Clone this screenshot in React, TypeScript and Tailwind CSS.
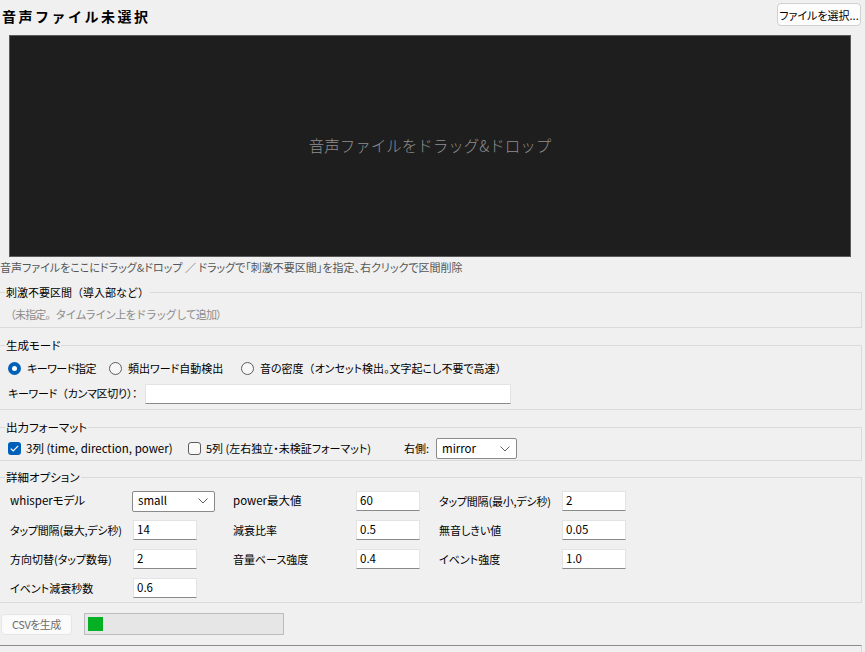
import React from "react";

const FONT = "font-['Noto_Sans_CJK_JP','Noto_Sans',sans-serif]";

function Chevron() {
  return (
    <svg width="10" height="6" viewBox="0 0 10 6" className="shrink-0">
      <polyline points="0.5,0.5 5,5 9.5,0.5" fill="none" stroke="#5f5f5f" strokeWidth="1" />
    </svg>
  );
}

function Select({ value, w }: { value: string; w: string }) {
  return (
    <div
      className={`${w} h-[21px] flex items-center justify-between pl-[5px] pr-[6px] bg-white border border-[#8a8a8a] rounded-[2px] text-[11.5px] text-black`}
    >
      <span>{value}</span>
      <Chevron />
    </div>
  );
}

function Input({ value, w }: { value?: string; w: string }) {
  return (
    <div
      className={`${w} h-[20px] flex items-center pl-[3px] bg-white border border-[#e3e3e3] border-b-[#8a8a8a] text-[11.5px] text-black`}
    >
      {value}
    </div>
  );
}

function Radio({ checked }: { checked?: boolean }) {
  return checked ? (
    <span className="w-[13px] h-[13px] rounded-full bg-[#005fb8] flex items-center justify-center shrink-0">
      <span className="w-[5px] h-[5px] rounded-full bg-white" />
    </span>
  ) : (
    <span className="w-[13px] h-[13px] rounded-full border border-[#5d5d5d] bg-[#f7f7f7] shrink-0" />
  );
}

function Check({ checked }: { checked?: boolean }) {
  return checked ? (
    <span className="w-[13px] h-[13px] rounded-[3px] bg-[#005fb8] flex items-center justify-center shrink-0">
      <svg width="9" height="7" viewBox="0 0 9 7">
        <polyline points="0.8,3.6 3.2,6 8.2,0.8" fill="none" stroke="white" strokeWidth="1.2" />
      </svg>
    </span>
  ) : (
    <span className="w-[13px] h-[13px] rounded-[3px] border border-[#5d5d5d] bg-[#f9f9f9] shrink-0" />
  );
}

function Group({
  title,
  className,
  legendClass,
  bodyClass,
  children,
}: {
  title: string;
  className?: string;
  legendClass?: string;
  bodyClass?: string;
  children: React.ReactNode;
}) {
  return (
    <fieldset className={`w-[862px] border border-l-0 border-[#dadada] ${className ?? ""}`}>
      <legend className={`ml-[5px] px-[1px] text-[11.5px] leading-4 text-black whitespace-nowrap ${legendClass ?? ""}`}>
        {title}
      </legend>
      <div className={bodyClass}>{children}</div>
    </fieldset>
  );
}

const N = "[font-feature-settings:normal]";

export default function App() {
  return (
    <div
      className={`w-[865px] h-[652px] overflow-hidden bg-[#f0f0f0] ${FONT} [font-feature-settings:'palt'] text-black whitespace-nowrap`}
    >
      {/* header */}
      <div className="flex justify-between items-start h-[35px]">
        <div className={`pl-[2px] pt-[6px] text-[14px] leading-5 font-bold tracking-[2.5px] ${N}`}>
          音声ファイル未選択
        </div>
        <button className="mt-[3px] mr-[4px] h-[23px] w-[84px] bg-[#fdfdfd] border border-[#d0d0d0] rounded-[4px] text-[11px] leading-4 text-black">
          ファイルを選択...
        </button>
      </div>

      {/* drop area */}
      <div className="ml-[9px] w-[842px] h-[222px] bg-[#1e1e1e] border border-[#5a5a5a] flex items-center justify-center">
        <span className={`text-[15.5px] font-light text-[#8e8e8e] ${N}`}>音声ファイルをドラッグ&amp;ドロップ</span>
      </div>

      <div className="mt-[2px] h-4 text-[11px] leading-4 text-[#565656]">
        音声ファイルをここにドラッグ&amp;ドロップ ／ ドラッグで「刺激不要区間」を指定、右クリックで区間削除
      </div>

      <Group
        title="刺激不要区間（導入部など）"
        legendClass={`${N} text-[11px]`}
        className="mt-[9px]"
        bodyClass="pt-[6px] pb-[5px] pl-[5px]"
      >
        <div className={`h-4 text-[11px] leading-4 text-[#8c8c8c] ${N} tracking-[-0.9px]`}>
          （未指定。タイムライン上をドラッグして追加）
        </div>
      </Group>

      <Group title="生成モード" className="mt-[9px]" bodyClass="pt-[5px] pb-[5px] pl-[8px]">
        <div className="flex items-center h-[20px] text-[11px]">
          <div className="w-[101px] flex items-center gap-[6px]">
            <Radio checked />
            <span className="tracking-[-0.5px]">キーワード指定</span>
          </div>
          <div className="w-[132px] flex items-center gap-[6px]">
            <Radio />
            <span>頻出ワード自動検出</span>
          </div>
          <div className="flex items-center gap-[6px]">
            <Radio />
            <span>
              音の密度<span className={N}>（</span>オンセット検出。文字起こし不要で高速
              <span className={N}>）</span>
            </span>
          </div>
        </div>
        <div className="mt-[5px] flex items-center h-[21px] text-[11px]">
          <div className="w-[137px] tracking-[-0.3px]">
            キーワード<span className={N}>（</span>カンマ区切り<span className={N}>）</span>：
          </div>
          <Input w="w-[366px]" />
        </div>
      </Group>

      <Group title="出力フォーマット" className="mt-[9px]" bodyClass="pt-[3px] pb-[1px] pl-[8px]">
        <div className="flex items-center h-[21px] text-[11.5px]">
          <div className="w-[180px] flex items-center gap-[5px]">
            <Check checked />
            <span>3列 (time, direction, power)</span>
          </div>
          <div className="w-[216px] flex items-center gap-[5px]">
            <Check />
            <span className="text-[11px]">5列 (左右独立・未検証フォーマット)</span>
          </div>
          <div className="w-[32px] text-[11px]">右側:</div>
          <Select value="mirror" w="w-[81px]" />
        </div>
      </Group>

      <Group title="詳細オプション" className="mt-[8px]" bodyClass="pt-[5px] pb-[3px] pl-[10px]">
        <div className="grid grid-cols-[123px_100px_123px_83px_123px_64px] auto-rows-[22px] gap-y-[7px] text-[11px] items-center">
          <div className="text-[11.5px]">whisperモデル</div>
          <div className="-ml-px">
            <Select value="small" w="w-[83px]" />
          </div>
          <div className="text-[11.5px]">power最大値</div>
          <Input value="60" w="w-[64px]" />
          <div className="tracking-[-0.2px]">タップ間隔(最小,デシ秒)</div>
          <Input value="2" w="w-[64px]" />

          <div className="tracking-[-0.2px]">タップ間隔(最大,デシ秒)</div>
          <Input value="14" w="w-[64px]" />
          <div>減衰比率</div>
          <Input value="0.5" w="w-[64px]" />
          <div>無音しきい値</div>
          <Input value="0.05" w="w-[64px]" />

          <div>方向切替(タップ数毎)</div>
          <Input value="2" w="w-[64px]" />
          <div>音量ベース強度</div>
          <Input value="0.4" w="w-[64px]" />
          <div>イベント強度</div>
          <Input value="1.0" w="w-[64px]" />

          <div>イベント減衰秒数</div>
          <Input value="0.6" w="w-[64px]" />
        </div>
      </Group>

      <div className="mt-[10px] flex items-center gap-[12px] h-[22px]">
        <button className="ml-px h-[21px] w-[71px] bg-[#fbfbfb] border border-[#e5e5e5] rounded-[4px] text-[11px] leading-4 text-[#6d6d6d] tracking-[-0.5px]">
          CSVを生成
        </button>
        <div className="w-[200px] h-[22px] bg-[#e6e6e6] border border-[#bcbcbc] flex items-center pl-[3px]">
          <div className="w-[15px] h-[14px] bg-[#06b025]" />
        </div>
      </div>

      <div className="mt-[10px] w-[862px] h-[20px] border-t border-t-[#8c8c8c] border-r border-r-[#d8d8d8]" />
    </div>
  );
}
